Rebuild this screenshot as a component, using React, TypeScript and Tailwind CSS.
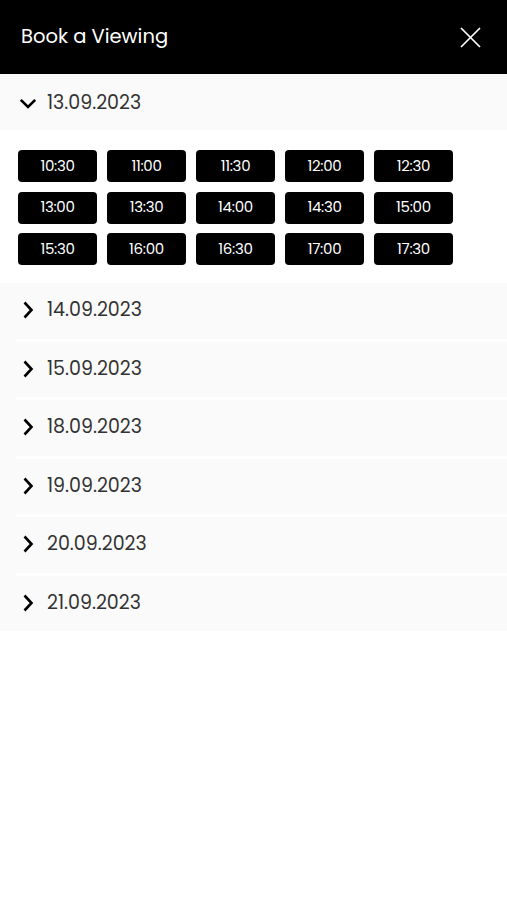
const times = [
  "10:30", "11:00", "11:30", "12:00", "12:30",
  "13:00", "13:30", "14:00", "14:30", "15:00",
  "15:30", "16:00", "16:30", "17:00", "17:30",
];

const dates = [
  "14.09.2023",
  "15.09.2023",
  "18.09.2023",
  "19.09.2023",
  "20.09.2023",
  "21.09.2023",
];

function Chevron({ open }: { open?: boolean }) {
  return (
    <span className="flex w-[18px] items-center justify-center">
      {open ? (
        <svg width="18" height="11" viewBox="0 0 18 11" fill="none">
          <path d="M1.8 1.8 L9 9 L16.2 1.8" stroke="black" strokeWidth="2.6" />
        </svg>
      ) : (
        <svg width="12" height="18" viewBox="0 0 12 18" fill="none">
          <path d="M2.5 1.5 L9.5 9 L2.5 16.5" stroke="black" strokeWidth="2.6" />
        </svg>
      )}
    </span>
  );
}

function DateRow({ date, open }: { date: string; open?: boolean }) {
  return (
    <button
      type="button"
      className={`flex w-full items-center gap-[10px] bg-[#fafafa] pl-[19px] text-left ${
        open ? "h-14 pt-[2px]" : "h-[55.5px] pb-[1px]"
      }`}
    >
      <Chevron open={open} />
      <span className="text-[19px] text-[#333]">{date}</span>
    </button>
  );
}

export default function App() {
  return (
    <div className="min-h-[900px] w-full bg-white font-['Poppins','Inter','Open_Sans',sans-serif]">
      <header className="flex h-[74px] items-center justify-between bg-black pl-[21px] pr-[26px]">
        <h1 className="text-[19.5px] font-normal text-white">Book a Viewing</h1>
        <button type="button" aria-label="Close">
          <svg width="21" height="21" viewBox="0 0 21 21" fill="none">
            <path d="M1 1 L20 20 M20 1 L1 20" stroke="white" strokeWidth="1.7" />
          </svg>
        </button>
      </header>

      <DateRow date="13.09.2023" open />

      <div className="grid grid-cols-[repeat(5,79px)] gap-x-[10px] gap-y-[9.5px] px-[18px] pt-5 pb-[18px]">
        {times.map((t) => (
          <button
            key={t}
            type="button"
            className="flex h-8 items-center justify-center rounded bg-black text-[15px] tracking-[-0.3px] text-white"
          >
            {t}
          </button>
        ))}
      </div>

      <div className="flex flex-col bg-[#fafafa]">
        {dates.map((d, i) => (
          <div key={d}>
            {i > 0 && <div className="ml-4 h-[3px] bg-[#fefefe]" />}
            <DateRow date={d} />
          </div>
        ))}
      </div>
    </div>
  );
}
